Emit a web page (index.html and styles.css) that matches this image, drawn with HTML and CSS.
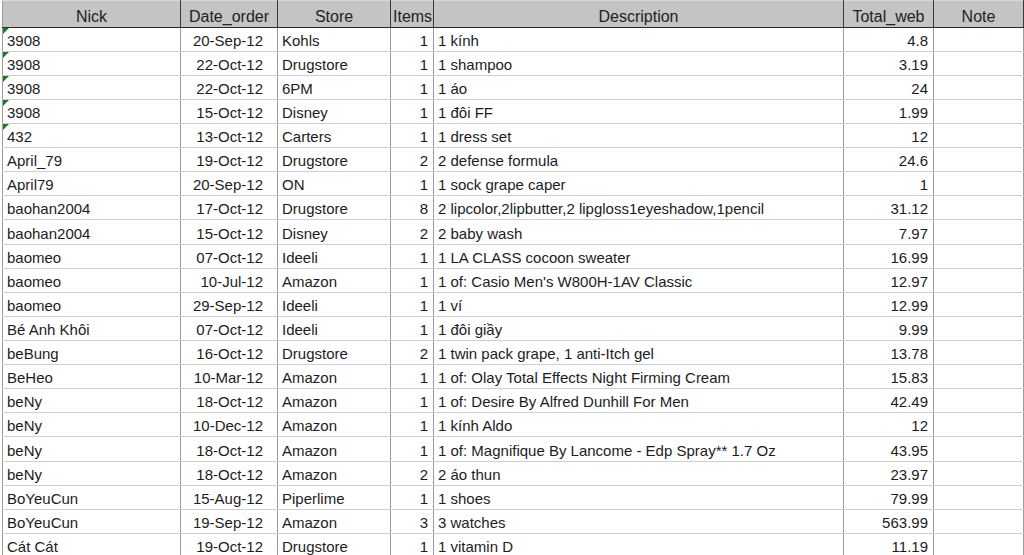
FILE: index.html
```html
<!DOCTYPE html>
<html>
<head>
<meta charset="utf-8">
<link rel="stylesheet" href="styles.css">
</head>
<body>
<table class="sheet">
<colgroup>
<col class="c-nick"><col class="c-date"><col class="c-store"><col class="c-items"><col class="c-desc"><col class="c-total"><col class="c-note">
</colgroup>
<thead>
<tr><th>Nick</th><th>Date_order</th><th>Store</th><th>Items</th><th>Description</th><th>Total_web</th><th>Note</th></tr>
</thead>
<tbody>
<tr><td class="txtnum">3908</td><td class="d">20-Sep-12</td><td>Kohls</td><td class="r">1</td><td>1 kính</td><td class="r">4.8</td><td></td></tr>
<tr><td class="txtnum">3908</td><td class="d">22-Oct-12</td><td>Drugstore</td><td class="r">1</td><td>1 shampoo</td><td class="r">3.19</td><td></td></tr>
<tr><td class="txtnum">3908</td><td class="d">22-Oct-12</td><td>6PM</td><td class="r">1</td><td>1 áo</td><td class="r">24</td><td></td></tr>
<tr><td class="txtnum">3908</td><td class="d">15-Oct-12</td><td>Disney</td><td class="r">1</td><td>1 đôi FF</td><td class="r">1.99</td><td></td></tr>
<tr><td class="txtnum">432</td><td class="d">13-Oct-12</td><td>Carters</td><td class="r">1</td><td>1 dress set</td><td class="r">12</td><td></td></tr>
<tr><td>April_79</td><td class="d">19-Oct-12</td><td>Drugstore</td><td class="r">2</td><td>2 defense formula</td><td class="r">24.6</td><td></td></tr>
<tr><td>April79</td><td class="d">20-Sep-12</td><td>ON</td><td class="r">1</td><td>1 sock grape caper</td><td class="r">1</td><td></td></tr>
<tr><td>baohan2004</td><td class="d">17-Oct-12</td><td>Drugstore</td><td class="r">8</td><td>2 lipcolor,2lipbutter,2 lipgloss1eyeshadow,1pencil</td><td class="r">31.12</td><td></td></tr>
<tr class="tall"><td>baohan2004</td><td class="d">15-Oct-12</td><td>Disney</td><td class="r">2</td><td>2 baby wash</td><td class="r">7.97</td><td></td></tr>
<tr><td>baomeo</td><td class="d">07-Oct-12</td><td>Ideeli</td><td class="r">1</td><td>1 LA CLASS cocoon sweater</td><td class="r">16.99</td><td></td></tr>
<tr><td>baomeo</td><td class="d">10-Jul-12</td><td>Amazon</td><td class="r">1</td><td>1 of: Casio Men's W800H-1AV Classic</td><td class="r">12.97</td><td></td></tr>
<tr><td>baomeo</td><td class="d">29-Sep-12</td><td>Ideeli</td><td class="r">1</td><td>1 ví</td><td class="r">12.99</td><td></td></tr>
<tr><td>Bé Anh Khôi</td><td class="d">07-Oct-12</td><td>Ideeli</td><td class="r">1</td><td>1 đôi giầy</td><td class="r">9.99</td><td></td></tr>
<tr><td>beBung</td><td class="d">16-Oct-12</td><td>Drugstore</td><td class="r">2</td><td>1 twin pack grape, 1 anti-Itch gel</td><td class="r">13.78</td><td></td></tr>
<tr><td>BeHeo</td><td class="d">10-Mar-12</td><td>Amazon</td><td class="r">1</td><td>1 of: Olay Total Effects Night Firming Cream</td><td class="r">15.83</td><td></td></tr>
<tr><td>beNy</td><td class="d">18-Oct-12</td><td>Amazon</td><td class="r">1</td><td>1 of: Desire By Alfred Dunhill For Men</td><td class="r">42.49</td><td></td></tr>
<tr><td>beNy</td><td class="d">10-Dec-12</td><td>Amazon</td><td class="r">1</td><td>1 kính Aldo</td><td class="r">12</td><td></td></tr>
<tr class="tall"><td>beNy</td><td class="d">18-Oct-12</td><td>Amazon</td><td class="r">1</td><td>1 of: Magnifique By Lancome - Edp Spray** 1.7 Oz</td><td class="r">43.95</td><td></td></tr>
<tr><td>beNy</td><td class="d">18-Oct-12</td><td>Amazon</td><td class="r">2</td><td>2 áo thun</td><td class="r">23.97</td><td></td></tr>
<tr><td>BoYeuCun</td><td class="d">15-Aug-12</td><td>Piperlime</td><td class="r">1</td><td>1 shoes</td><td class="r">79.99</td><td></td></tr>
<tr><td>BoYeuCun</td><td class="d">19-Sep-12</td><td>Amazon</td><td class="r">3</td><td>3 watches</td><td class="r">563.99</td><td></td></tr>
<tr><td>Cát Cát</td><td class="d">19-Oct-12</td><td>Drugstore</td><td class="r">1</td><td>1 vitamin D</td><td class="r">11.19</td><td></td></tr>
</tbody>
</table>
</body>
</html>
```
FILE: styles.css
```css
html, body {
  margin: 0;
  padding: 0;
  background: #fff;
  overflow: hidden;
}
body {
  font-family: "Liberation Sans", Arial, sans-serif;
  font-size: 15px;
  color: #1c1c1c;
}
.sheet {
  border-collapse: collapse;
  table-layout: fixed;
  width: 1021px;
  margin-left: 2px;
}
.c-nick { width: 178px; }
.c-date { width: 97px; }
.c-store { width: 113px; }
.c-items { width: 43px; }
.c-desc { width: 410px; }
.c-total { width: 90px; }
.c-note { width: 90px; }
.sheet th {
  background: #c4c4c4;
  font-weight: normal;
  font-size: 16px;
  height: 25px;
  padding: 0 2px 1px;
  text-align: center;
  vertical-align: bottom;
  color: #222;
  border-left: 1px solid #3a3a3a;
  border-right: 1px solid #3a3a3a;
  border-bottom: 1px solid #2a2a2a;
  border-top: 1px solid #d8d8d8;
  white-space: nowrap;
  overflow: hidden;
}
.sheet th:first-child { border-left-color: #9a9a9a; }
.sheet td {
  height: 23px;
  padding: 0 3px 0 4px;
  vertical-align: bottom;
  line-height: 20px;
  border-left: 1px solid #9c9c9c;
  border-right: 1px solid #9c9c9c;
  border-bottom: 1px solid #cfcfcf;
  white-space: nowrap;
  overflow: hidden;
}
.sheet tr.tall td { height: 24px; }
.sheet td.r {
  text-align: right;
  padding: 0 5px 0 2px;
}
.sheet td.d {
  text-align: right;
  padding: 0 14px 0 2px;
}
.sheet td.txtnum {
  position: relative;
}
.sheet td.txtnum::before {
  content: "";
  position: absolute;
  left: 0;
  top: 0;
  width: 0;
  height: 0;
  border-top: 6px solid #1d7a2e;
  border-right: 6px solid transparent;
}
```
